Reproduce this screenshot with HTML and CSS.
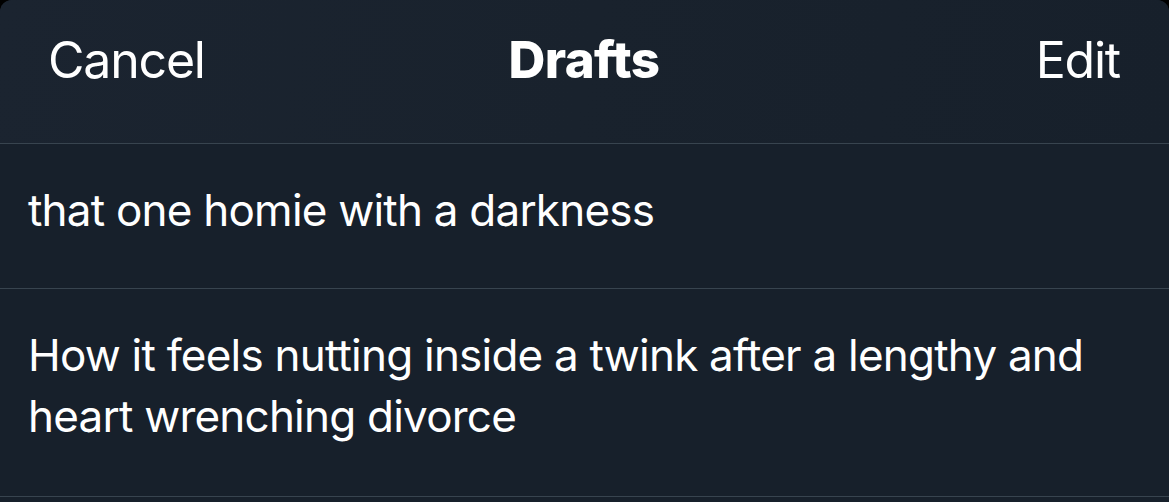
FILE: index.html
```html
<!DOCTYPE html>
<html lang="en">
<head>
<meta charset="utf-8">
<title>Drafts</title>
<link rel="stylesheet" href="styles.css">
</head>
<body>
<div class="sheet">
  <header class="topbar">
    <span class="btn btn-left">Cancel</span>
    <span class="title">Drafts</span>
    <span class="btn btn-right">Edit</span>
  </header>
  <div class="draft draft-one">that one homie with a darkness</div>
  <div class="draft draft-two">How it feels nutting inside a twink after a lengthy and heart wrenching divorce</div>
</div>
</body>
</html>
```
FILE: styles.css
```css
html, body {
  margin: 0;
  padding: 0;
  background: #000;
  height: 100%;
  overflow: hidden;
}
.sheet {
  background: #17202b;
  border-radius: 12px 12px 0 0;
  height: 100%;
  color: #fff;
  font-family: Inter, "Noto Sans", sans-serif;
}
.topbar {
  height: 144px;
  box-sizing: border-box;
  border-bottom: 1px solid #38444f;
  display: grid;
  grid-template-columns: 1fr auto 1fr;
  align-items: start;
  padding: 30px 49px 0 48px;
  background: linear-gradient(100deg, #1b2430 0%, #19222d 50%, #17202b 100%);
  border-radius: 12px 12px 0 0;
}
.btn {
  font-size: 50px;
  line-height: 60px;
  font-weight: 400;
  letter-spacing: -1.2px;
}
.btn-right {
  justify-self: end;
}
.title {
  font-size: 51px;
  line-height: 60px;
  font-weight: 800;
  letter-spacing: -0.6px;
}
.draft {
  box-sizing: border-box;
  border-bottom: 1px solid #38444f;
  padding: 36px 28px 0;
  font-size: 44px;
  line-height: 61px;
  letter-spacing: -0.78px;
}
.draft-one {
  height: 145px;
}
.draft-two {
  height: 208px;
}
```
